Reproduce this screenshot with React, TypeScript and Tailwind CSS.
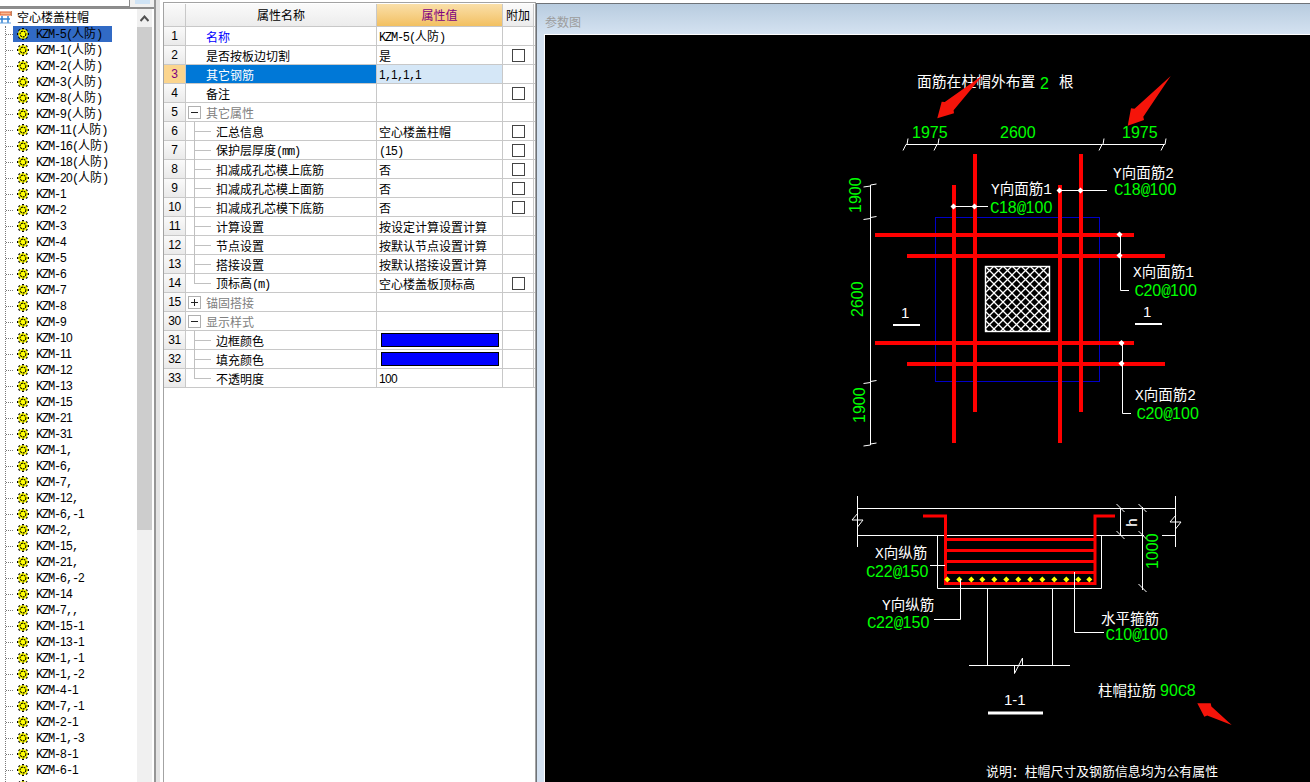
import React from 'react';

const CJK = "font-['Noto_Sans_CJK_SC','Noto_Sans',sans-serif]";

const TREE_ITEMS = [
  'KZM-5(人防)', 'KZM-1(人防)', 'KZM-2(人防)', 'KZM-3(人防)', 'KZM-8(人防)', 'KZM-9(人防)',
  'KZM-11(人防)', 'KZM-16(人防)', 'KZM-18(人防)', 'KZM-20(人防)',
  'KZM-1', 'KZM-2', 'KZM-3', 'KZM-4', 'KZM-5', 'KZM-6', 'KZM-7', 'KZM-8', 'KZM-9', 'KZM-10',
  'KZM-11', 'KZM-12', 'KZM-13', 'KZM-15', 'KZM-21', 'KZM-31',
  'KZM-1,', 'KZM-6,', 'KZM-7,', 'KZM-12,', 'KZM-6,-1', 'KZM-2,', 'KZM-15,', 'KZM-21,', 'KZM-6,-2',
  'KZM-14', 'KZM-7,,', 'KZM-15-1', 'KZM-13-1', 'KZM-1,-1', 'KZM-1,-2', 'KZM-4-1', 'KZM-7,-1',
  'KZM-2-1', 'KZM-1,-3', 'KZM-8-1', 'KZM-6-1', '',
];

type Row = {
  num: number;
  name: string;
  value?: string;
  check?: boolean;
  kind?: 'plain' | 'link' | 'selected' | 'open' | 'closed' | 'child' | 'last';
  color?: boolean;
};

const ROWS: Row[] = [
  { num: 1, name: '名称', value: 'KZM-5(人防)', kind: 'link' },
  { num: 2, name: '是否按板边切割', value: '是', check: true },
  { num: 3, name: '其它钢筋', value: '1,1,1,1', kind: 'selected' },
  { num: 4, name: '备注', check: true },
  { num: 5, name: '其它属性', kind: 'open' },
  { num: 6, name: '汇总信息', value: '空心楼盖柱帽', check: true, kind: 'child' },
  { num: 7, name: '保护层厚度(mm)', value: '(15)', check: true, kind: 'child' },
  { num: 8, name: '扣减成孔芯模上底筋', value: '否', check: true, kind: 'child' },
  { num: 9, name: '扣减成孔芯模上面筋', value: '否', check: true, kind: 'child' },
  { num: 10, name: '扣减成孔芯模下底筋', value: '否', check: true, kind: 'child' },
  { num: 11, name: '计算设置', value: '按设定计算设置计算', kind: 'child' },
  { num: 12, name: '节点设置', value: '按默认节点设置计算', kind: 'child' },
  { num: 13, name: '搭接设置', value: '按默认搭接设置计算', kind: 'child' },
  { num: 14, name: '顶标高(m)', value: '空心楼盖板顶标高', check: true, kind: 'last' },
  { num: 15, name: '锚固搭接', kind: 'closed' },
  { num: 30, name: '显示样式', kind: 'open' },
  { num: 31, name: '边框颜色', color: true, kind: 'child' },
  { num: 32, name: '填充颜色', color: true, kind: 'child' },
  { num: 33, name: '不透明度', value: '100', kind: 'last' },
];

// half-width latin runs, the original UI font sets them at 6px per glyph.
// digits go in Liberation Sans because the mono face has a dotted zero
function Latin({ text }: { text: string }) {
  return (
    <>
      {text.split(/([0-9]+)/).map((part, i) =>
        i % 2 === 1 ? (
          <span key={i} className="font-['Liberation_Sans',sans-serif] tracking-[-0.67px]">
            {part}
          </span>
        ) : (
          <span key={i} className="font-['Liberation_Mono',monospace] tracking-[-1.2px]">
            {part}
          </span>
        ),
      )}
    </>
  );
}

function Mixed({ text }: { text: string }) {
  return (
    <>
      {text.split(/([A-Za-z0-9,\-()]+)/).map((part, i) =>
        i % 2 === 1 ? <Latin key={i} text={part} /> : <span key={i}>{part}</span>,
      )}
    </>
  );
}

function Gear() {
  return (
    <svg width="12" height="12" viewBox="0 0 12 12" className="shrink-0">
      <g stroke="#000" strokeWidth="2">
        <line x1="6" y1="0" x2="6" y2="12" />
        <line x1="0" y1="6" x2="12" y2="6" />
        <line x1="1.8" y1="1.8" x2="10.2" y2="10.2" />
        <line x1="10.2" y1="1.8" x2="1.8" y2="10.2" />
      </g>
      <circle cx="6" cy="6" r="4.8" fill="#ffff00" />
      <circle cx="6" cy="6" r="2.9" fill="#ffff00" stroke="#000" strokeWidth="1.1" strokeDasharray="2 0.8" />
    </svg>
  );
}

function RootIcon() {
  return (
    <svg width="12" height="13" viewBox="0 0 12 13" className="shrink-0">
      <rect x="0" y="1" width="11" height="3" fill="#f8b890" stroke="#e06030" strokeWidth="1" />
      <path d="M11.5 0v5" stroke="#c08060" />
      <path d="M0 8h10" stroke="#3080d0" strokeWidth="1.5" />
      <path d="M2 5v7M8 5v7" stroke="#3080d0" strokeWidth="1.5" />
      <path d="M0 12h11" stroke="#60a0e0" />
    </svg>
  );
}

function TreePanel() {
  return (
    <aside className={`w-[154px] h-full shrink-0 flex flex-col overflow-hidden ${CJK}`}>
      <div className="h-[7px] shrink-0 flex bg-[#f0f0f0]">
        <div className="w-[130px] bg-white border-r border-b border-[#8a8a8a]" />
        <div className="ml-[5px] w-[15px] h-[4px] bg-[#cfe3f5]" />
      </div>
      <div className="h-[2px] shrink-0 bg-[#8d8d8d]" />
      <div className="flex-1 flex min-h-0">
        <div className="w-[137px] shrink-0 overflow-hidden">
          <div className="h-[17px] pb-px flex items-center text-[12px] text-black leading-none">
            <RootIcon />
            <span className="ml-[5px]">空心楼盖柱帽</span>
          </div>
          <div className="ml-[5px] border-l border-dotted border-[#7a7a7a]">
            {TREE_ITEMS.map((item, i) => (
              <div key={i} className="h-4 flex items-center">
                <div className="w-[7px] border-t border-dotted border-[#7a7a7a]" />
                <div
                  className={`h-4 w-[99px] flex items-center pl-[4px] text-[12px] leading-none text-black ${
                    i === 0 ? 'bg-[#316ac5]' : ''
                  }`}
                >
                  <Gear />
                  <span className="ml-[7px] whitespace-nowrap">
                    <Mixed text={item} />
                  </span>
                </div>
              </div>
            ))}
          </div>
        </div>
        <div className="w-[15px] shrink-0 flex flex-col bg-[#f0f0f0]">
          <div className="h-[18px] shrink-0 flex items-center justify-center">
            <svg width="9" height="7" viewBox="0 0 9 7">
              <path d="M0.5 6 4.5 1.5 8.5 6" fill="none" stroke="#505050" strokeWidth="2" />
            </svg>
          </div>
          <div className="h-[503px] bg-[#cdcdcd]" />
        </div>
      </div>
    </aside>
  );
}

function NameCell({ row }: { row: Row }) {
  const kind = row.kind ?? 'plain';
  if (kind === 'open' || kind === 'closed') {
    return (
      <div className="h-full flex items-center pl-[2px] text-[#808080]">
        <span className="relative w-[13px] h-[13px] border border-[#b0b0b0] bg-white shrink-0">
          <span className="absolute left-[2px] top-[5px] w-[7px] h-px bg-[#222]" />
          {kind === 'closed' && <span className="absolute left-[5px] top-[2px] w-px h-[7px] bg-[#222]" />}
        </span>
        <span className="ml-[5px] pt-[2px]">{row.name}</span>
      </div>
    );
  }
  if (kind === 'child' || kind === 'last') {
    return (
      <div className="h-full flex items-center pl-[8px] text-black">
        {kind === 'child' ? (
          <span className="self-stretch w-[17px] -mb-px border-l border-[#c0c0c0] flex items-center shrink-0">
            <span className="w-full h-px bg-[#c0c0c0]" />
          </span>
        ) : (
          <span className="self-start w-[17px] h-[10px] border-l border-b border-[#c0c0c0] shrink-0" />
        )}
        <span className="ml-[5px] pt-[2px] whitespace-nowrap">
          <Mixed text={row.name} />
        </span>
      </div>
    );
  }
  return (
    <div
      className={`h-full flex items-center pl-[20px] ${
        kind === 'selected' ? 'bg-[#0078d7] text-white' : kind === 'link' ? 'text-[#0000ff]' : 'text-black'
      }`}
    >
      <span className="pt-[2px]">{row.name}</span>
    </div>
  );
}

function PropertyTable() {
  return (
    <section className={`w-[373px] shrink-0 mt-[2px] border-l border-t border-r border-[#a3a3a3] pt-px text-[12px] leading-none ${CJK}`}>
      <div className="grid grid-cols-[22px_191px_126px_31px] h-[23px] border-b border-[#c8c8c8]">
        <div className="border-r border-[#c8c8c8] bg-gradient-to-b from-[#fafafa] to-[#ececec]" />
        <div className="border-r border-[#c8c8c8] bg-gradient-to-b from-[#fafafa] to-[#ececec] flex items-center justify-center text-black">
          属性名称
        </div>
        <div className="border-r border-[#c8c8c8] bg-gradient-to-b from-[#fadfa8] to-[#f2c060] flex items-center justify-center text-[#800080]">
          属性值
        </div>
        <div className="border-r border-[#c8c8c8] bg-gradient-to-b from-[#fafafa] to-[#ececec] flex items-center justify-center text-black">
          附加
        </div>
      </div>
      {ROWS.map((row) => {
        const selected = row.kind === 'selected';
        return (
          <div key={row.num} className="grid grid-cols-[22px_191px_126px_31px] h-[19px] border-b border-[#c8c8c8]">
            <div
              className={`border-r border-[#c8c8c8] flex items-center justify-center font-['Liberation_Sans',sans-serif] ${
                selected ? 'bg-[#fbd58e] text-[#800080]' : 'bg-gradient-to-b from-[#fafafa] to-[#eaeaea] text-black'
              }`}
            >
              <span className="tracking-[-0.4px]">{row.num}</span>
            </div>
            <div className="border-r border-[#c8c8c8] min-w-0">
              <NameCell row={row} />
            </div>
            <div className={`border-r border-[#c8c8c8] flex items-center pl-[2px] text-black ${selected ? 'bg-[#d5e7f7]' : ''}`}>
              {row.color ? (
                <div className="ml-[2px] w-[118px] h-[14px] bg-[#0000ff] border border-black" />
              ) : (
                <span className="pt-[2px] whitespace-nowrap">
                  <Mixed text={row.value ?? ''} />
                </span>
              )}
            </div>
            <div className="border-r border-[#c8c8c8] flex items-center justify-center">
              {row.check && <span className="w-[13px] h-[13px] bg-white border border-[#444]" />}
            </div>
          </div>
        );
      })}
    </section>
  );
}

const GREEN = '#00ff00';
const RED = '#ff0000';
const SANS = "'Liberation Sans', sans-serif";
const MONO = "'Liberation Mono', monospace";
const LABEL = "'Liberation Mono', 'Noto Sans CJK SC', monospace";

// CAD digits and letters sit on a fixed 8.9px pitch
function Num({ x, y, text, rotate }: { x: number; y: number; text: string; rotate?: boolean }) {
  return (
    <text y={y} fill={GREEN} fontSize="16" transform={rotate ? `rotate(-90 ${x} ${y})` : undefined}>
      {text.split('').map((c, i) => (
        <tspan key={i} x={x + i * 8.9} fontFamily={/[0-9]/.test(c) ? SANS : MONO}>
          {c}
        </tspan>
      ))}
    </text>
  );
}

function Label({ x, y, text, size = 14.5 }: { x: number; y: number; text: string; size?: number }) {
  return (
    <text x={x} y={y} fill="#fff" fontSize={size} fontFamily={LABEL}>
      {text}
    </text>
  );
}

function Dot({ x, y, color = '#fff' }: { x: number; y: number; color?: string }) {
  return <path d={`M${x - 3} ${y}L${x} ${y - 3}L${x + 3} ${y}L${x} ${y + 3}Z`} fill={color} />;
}

function TickH({ x, y }: { x: number; y: number }) {
  return <path d={`M${x - 4} ${y + 6}L${x - 1} ${y}L${x} ${y}L${x + 1} ${y - 6}`} stroke="#fff" fill="none" />;
}

function TickV({ x, y }: { x: number; y: number }) {
  return <path d={`M${x - 7} ${y + 2}L${x} ${y + 1}L${x} ${y}L${x + 6} ${y - 1}`} stroke="#fff" fill="none" />;
}

function TickD({ x, y }: { x: number; y: number }) {
  return <path d={`M${x - 4} ${y - 4}L${x + 4} ${y + 4}`} stroke="#fff" />;
}

function Drawing() {
  const stirrups = [539.5, 550.5, 561.5, 572.5];
  const bars = [947.3, 959.3, 971.3, 982.3, 994.3, 1006.3, 1018.3, 1030.3, 1042.3, 1054.3, 1066.3, 1078.3, 1089.3];
  return (
    <svg width="765" height="747" viewBox="545 35 765 747" className="block">
      <defs>
        <pattern id="hatch" width="9" height="9" patternUnits="userSpaceOnUse" x="985" y="266">
          <path d="M0 0L9 9M9 0L0 9" stroke="#fff" strokeWidth="1.3" />
        </pattern>
      </defs>

      {/* plan */}
      <text x="917" y="87" fill="#fff" fontSize="14.8" fontFamily={LABEL}>面筋在柱帽外布置</text>
      <Num x={1040} y={89} text="2" />
      <text x="1059" y="87" fill="#fff" fontSize="14.5" fontFamily={LABEL}>根</text>

      <path d="M907 144.5H1165" stroke="#fff" />
      <TickH x={907} y={144.5} />
      <TickH x={938} y={144.5} />
      <TickH x={1103} y={144.5} />
      <TickH x={1165} y={144.5} />
      <Num x={912} y={138} text="1975" />
      <Num x={1000} y={138} text="2600" />
      <Num x={1122} y={138} text="1975" />

      <path d="M870.5 185V444" stroke="#fff" />
      <TickV x={870.5} y={185} />
      <TickV x={870.5} y={217.5} />
      <TickV x={870.5} y={381.5} />
      <TickV x={870.5} y={444} />
      <Num x={861} y={213} text="1900" rotate />
      <Num x={863} y={317} text="2600" rotate />
      <Num x={865} y={423} text="1900" rotate />

      <rect x="935.5" y="217.5" width="164" height="164" fill="none" stroke="#0000c8" />
      <rect x="985.5" y="266.5" width="64" height="65" fill="url(#hatch)" stroke="#fff" strokeWidth="1.4" />

      <g fill={RED}>
        <rect x="952" y="185" width="4" height="258" />
        <rect x="973" y="154" width="4" height="258" />
        <rect x="1058" y="185" width="4" height="258" />
        <rect x="1079" y="154" width="4" height="258" />
        <rect x="875" y="233" width="259" height="4" />
        <rect x="907" y="254" width="258" height="4" />
        <rect x="875" y="341" width="259" height="4" />
        <rect x="907" y="362" width="258" height="4" />
      </g>

      <path d="M953.5 206.5H988M1059.5 190.5H1107M1120.5 235V290.5H1129M1122.5 343V413.5H1131" fill="none" stroke="#fff" />
      <Dot x={953.5} y={206.5} />
      <Dot x={974.5} y={206.5} />
      <Dot x={1059.5} y={190.5} />
      <Dot x={1080.5} y={190.5} />
      <Dot x={1119.5} y={234.5} />
      <Dot x={1119.5} y={255.5} />
      <Dot x={1121.5} y={343} />
      <Dot x={1121.5} y={363.5} />

      <Label x={991} y={194} text="Y向面筋1" />
      <Num x={990} y={213} text="C18@100" />
      <Label x={1113} y={178} text="Y向面筋2" />
      <Num x={1114} y={195} text="C18@100" />
      <Label x={1133} y={277} text="X向面筋1" />
      <Num x={1134.5} y={296} text="C20@100" />
      <Label x={1135} y={400} text="X向面筋2" />
      <Num x={1136.5} y={419} text="C20@100" />

      <text x="901" y="318" fill="#fff" fontSize="15" fontFamily={SANS}>1</text>
      <path d="M893 325H920" stroke="#fff" strokeWidth="2" />
      <text x="1143" y="317" fill="#fff" fontSize="15" fontFamily={SANS}>1</text>
      <path d="M1135 324H1162" stroke="#fff" strokeWidth="2" />

      {/* section 1-1 */}
      <path
        d="M857.5 508.5H1175.5M857.5 535.5H1144M1162 535.5H1175.5M857.5 496V547M1175.5 496V547"
        fill="none"
        stroke="#fff"
      />
      <path d="M852 520H863L857.5 527M1170 522H1181L1175.5 529" fill="none" stroke="#fff" />
      <path d="M852 520L858 513M1170 522L1176 515" fill="none" stroke="#fff" />
      <path d="M937.5 535.5V588.5H1101.5V535.5" fill="none" stroke="#fff" />
      <path d="M987.5 588.5V665M1052.5 588.5V665M969 665.5H1070" fill="none" stroke="#fff" />
      <path d="M1014.5 665V673.5L1022.5 658V665" fill="none" stroke="#fff" />

      <path d="M923 516H945.5V583.5H1095V516H1115" fill="none" stroke={RED} strokeWidth="3" />
      {stirrups.map((y) => (
        <path key={y} d={`M945 ${y}H1095`} stroke={RED} strokeWidth="3" />
      ))}
      {bars.map((x) => (
        <Dot key={x} x={x} y={579.5} color="#ffff00" />
      ))}

      <path d="M930 565.5H945M960.5 579V619.5H934M1074.5 572V632.5H1104" fill="none" stroke="#fff" />
      <Label x={875} y={558} text="X向纵筋" />
      <Num x={866} y={577} text="C22@150" />
      <Label x={882} y={610} text="Y向纵筋" />
      <Num x={867} y={628} text="C22@150" />
      <text x="1101" y="624" fill="#fff" fontSize="14.5" fontFamily={LABEL}>水平箍筋</text>
      <Num x={1105.5} y={640} text="C10@100" />

      <path d="M1120.5 508V535M1142.5 507V590M1120 535.5H1144" fill="none" stroke="#fff" />
      <TickD x={1120.5} y={508} />
      <TickD x={1120.5} y={535} />
      <TickD x={1142.5} y={508} />
      <TickD x={1142.5} y={535} />
      <TickD x={1142.5} y={588} />
      <text x="1137" y="527" fill="#fff" fontSize="15" fontFamily={MONO} transform="rotate(-90 1137 527)">h</text>
      <Num x={1158} y={569} text="1000" rotate />

      <text x="1004" y="705" fill="#fff" fontSize="15" fontFamily={SANS}>1-1</text>
      <path d="M988 713H1043" stroke="#fff" strokeWidth="3" />

      <text x="1098" y="696" fill="#fff" fontSize="14.5" fontFamily={LABEL}>柱帽拉筋</text>
      <Num x={1160} y={696} text="90C8" />

      <text x="986" y="776" fill="#fff" fontSize="12.9" fontFamily={LABEL}>说明：柱帽尺寸及钢筋信息均为公有属性</text>

      {/* markup arrows drawn over the screenshot */}
      <g fill="#f5140a">
        <polygon points="983,75 953.6,110.2 954,113.3 937.3,118.3 941.7,101.7 944.8,101.9" />
        <polygon points="1170.7,76 1143.3,116.8 1144,120 1127.7,125.7 1131,108.3 1134.5,108.8" />
        <polygon points="1231.7,725 1207.2,715.4 1204.3,716.7 1197.3,703.3 1210.7,703.3 1211.4,706.4" />
      </g>
    </svg>
  );
}

function ParamPanel() {
  return (
    <section className={`flex-1 mt-[3px] bg-[#d4e2f1] border-l border-t border-[#6e7378] min-w-0 ${CJK}`}>
      <div className="h-[30px] pl-[8px] pt-[12px] text-[12px] leading-none text-[#9c9c9c] bg-gradient-to-b from-[#b8ccdf] to-[#d4e2f1]">
        参数图
      </div>
      <div className="ml-[7px] border-l border-t border-white bg-black h-[748px]">
        <Drawing />
      </div>
    </section>
  );
}

export default function App() {
  return (
    <div className="w-[1310px] h-[782px] overflow-hidden flex bg-white">
      <TreePanel />
      <div className="w-[9px] shrink-0 border-l-2 border-[#969696] flex">
        <div className="w-[4px] bg-[#e4e4e4]" />
      </div>
      <PropertyTable />
      <ParamPanel />
    </div>
  );
}
